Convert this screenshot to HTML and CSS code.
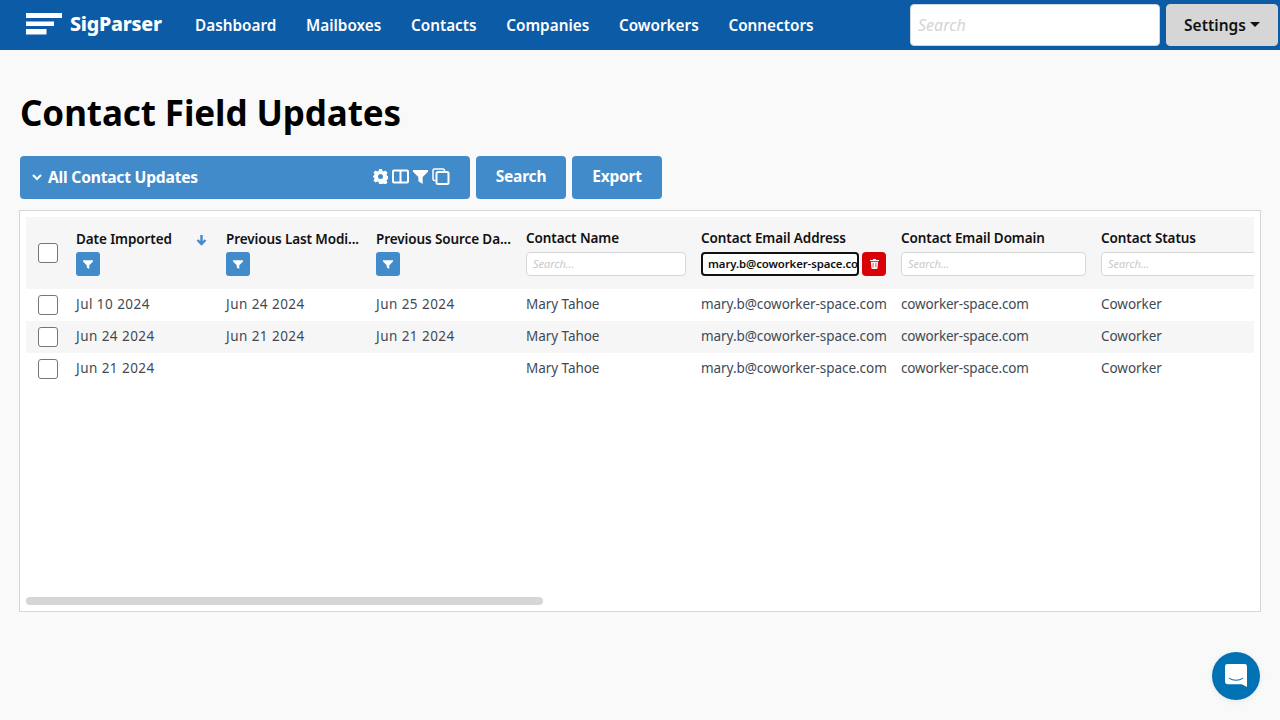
FILE: index.html
```html
<!DOCTYPE html>
<html lang="en">
<head>
<meta charset="utf-8">
<title>Contact Field Updates</title>
<link rel="stylesheet" href="styles.css">
</head>
<body>
<header class="nav">
  <a class="brand">
    <svg class="brand-mark" width="36" height="23" viewBox="0 0 36 23"><path fill="#fff" d="M0 1h36v5H0zM0 9.500h28v4.500H0zM0 17h20.500v5.500H0z"/></svg>
    <span class="brand-name">SigParser</span>
  </a>
  <nav class="nav-links">
    <a>Dashboard</a><a>Mailboxes</a><a>Contacts</a><a>Companies</a><a>Coworkers</a><a>Connectors</a>
  </nav>
  <input class="nav-search" placeholder="Search">
  <button class="settings">Settings<span class="caret"></span></button>
</header>
<main class="page">
  <h1 class="title">Contact Field Updates</h1>
  <div class="toolbar">
    <div class="view-select">
      <svg class="chev" width="10" height="7" viewBox="0 0 10 7"><path d="M1 1l4 4 4-4" fill="none" stroke="#fff" stroke-width="2"/></svg>
      <span class="view-name">All Contact Updates</span>
      <span class="view-icons">
        <svg width="15" height="15" viewBox="0 0 15 15"><path fill="#fff" fill-rule="evenodd" d="M6 0h3l.4 2 1.300.6 1.800-1 2 2.100-1 1.700.5 1.300 2 .4v3l-2 .4-.5 1.300 1 1.700-2 2.100-1.800-1-1.300.5L9 15H6l-.4-2-1.300-.5-1.800 1-2-2.100 1-1.700L1 8.400l-2-.4v-1l2-.4.5-1.300-1-1.700 2-2.100 1.800 1 1.300-.6zM7.500 5a2.500 2.500 0 1 0 0 5 2.500 2.500 0 0 0 0-5z"/></svg>
        <svg width="17" height="15" viewBox="0 0 17 15"><path fill="none" stroke="#fff" stroke-width="2" d="M2 1.500h13a1 1 0 0 1 1 1v10a1 1 0 0 1-1 1H2a1 1 0 0 1-1-1v-10a1 1 0 0 1 1-1zM8.500 1.500v12"/></svg>
        <svg width="15" height="15" viewBox="0 0 14 14"><path fill="#fff" d="M0 1h14v1.500L9 7.500V14l-4-2.500v-4L0 2.500z"/></svg>
        <svg width="18" height="17" viewBox="0 0 18 17"><path fill="none" stroke="#fff" stroke-width="1.500" d="M3.500 12.500h-1a1.500 1.500 0 0 1-1.500-1.500V2.500A1.500 1.500 0 0 1 2.500 1H11a1.500 1.500 0 0 1 1.500 1.500v1"/><rect x="4.500" y="4" width="12" height="12" rx="1.500" fill="none" stroke="#fff" stroke-width="2"/></svg>
      </span>
    </div>
    <button class="action">Search</button>
    <button class="action">Export</button>
  </div>
  <section class="panel">
    <div class="table">
      <div class="row head">
        <div class="cell check"><span class="box"></span></div>
        <div class="cell col">
          <div class="label label-sorted"><span>Date Imported</span>
            <svg width="11" height="12" viewBox="0 0 11 12"><path fill="none" stroke="#428bca" stroke-width="2.400" d="M5.500 1v9M1.500 6l4 4 4-4"/></svg>
          </div>
          <span class="filter"><svg width="10" height="11" viewBox="0 0 12 12"><path fill="#fff" d="M0 1h12v1.500L7.500 7v4.500l-3-2V7L0 2.500z"/></svg></span>
        </div>
        <div class="cell col">
          <div class="label">Previous Last Modi...</div>
          <span class="filter"><svg width="10" height="11" viewBox="0 0 12 12"><path fill="#fff" d="M0 1h12v1.500L7.500 7v4.500l-3-2V7L0 2.500z"/></svg></span>
        </div>
        <div class="cell col">
          <div class="label">Previous Source Da...</div>
          <span class="filter"><svg width="10" height="11" viewBox="0 0 12 12"><path fill="#fff" d="M0 1h12v1.500L7.500 7v4.500l-3-2V7L0 2.500z"/></svg></span>
        </div>
        <div class="cell col col-s">
          <div class="label">Contact Name</div>
          <input class="col-search" placeholder="Search...">
        </div>
        <div class="cell col col-s">
          <div class="label">Contact Email Address</div>
          <div class="active-filter">
            <input class="col-search active" value="mary.b@coworker-space.com">
            <span class="trash"><svg width="9" height="10" viewBox="0 0 10 11"><path fill="#fff" fill-rule="evenodd" d="M3.500 0h3l.5 1h3v1.300H0V1h3zM1 3h8l-.6 7a1 1 0 0 1-1 1H2.600a1 1 0 0 1-1-1zm2 1.200v5.300h.8V4.200zm3.200 0v5.300H7V4.200z"/></svg></span>
          </div>
        </div>
        <div class="cell col col-s">
          <div class="label">Contact Email Domain</div>
          <input class="col-search" placeholder="Search...">
        </div>
        <div class="cell col col-s">
          <div class="label">Contact Status</div>
          <input class="col-search" placeholder="Search...">
        </div>
      </div>
      <div class="row body">
        <div class="cell check"><span class="box"></span></div>
        <div class="cell date">Jul 10 2024</div><div class="cell date">Jun 24 2024</div><div class="cell date">Jun 25 2024</div>
        <div class="cell">Mary Tahoe</div><div class="cell">mary.b@coworker-space.com</div><div class="cell domain">coworker-space.com</div><div class="cell">Coworker</div>
      </div>
      <div class="row body alt">
        <div class="cell check"><span class="box"></span></div>
        <div class="cell date">Jun 24 2024</div><div class="cell date">Jun 21 2024</div><div class="cell date">Jun 21 2024</div>
        <div class="cell">Mary Tahoe</div><div class="cell">mary.b@coworker-space.com</div><div class="cell domain">coworker-space.com</div><div class="cell">Coworker</div>
      </div>
      <div class="row body">
        <div class="cell check"><span class="box"></span></div>
        <div class="cell date">Jun 21 2024</div><div class="cell"></div><div class="cell"></div>
        <div class="cell">Mary Tahoe</div><div class="cell">mary.b@coworker-space.com</div><div class="cell domain">coworker-space.com</div><div class="cell">Coworker</div>
      </div>
    </div>
    <div class="scrollbar"></div>
  </section>
</main>
<button class="chat" aria-label="Chat">
  <svg width="22" height="24" viewBox="0.500 1 23 25"><path fill="#fff" d="M3 1h18a2.500 2.500 0 0 1 2.500 2.500V25l-5.500-3H3a2.500 2.500 0 0 1-2.500-2.500v-16A2.500 2.500 0 0 1 3 1z"/><path d="M5 16c4 2.600 10 2.600 14 0" fill="none" stroke="#0071b2" stroke-width="1.100" stroke-linecap="round"/></svg>
</button>
</body>
</html>
```
FILE: styles.css
```css
* { box-sizing: border-box; }
html, body { margin: 0; padding: 0; height: 100%; overflow: hidden; }
body { background: #f9f9f9; font-family: "Noto Sans", "Open Sans", sans-serif; color: #000; }

.nav { height: 50px; background: #0c5ba6; display: flex; align-items: center; padding: 0 2px 0 26px; }
.brand { display: flex; align-items: center; gap: 8px; width: 169px; }
.brand-mark { display: block; margin-top: -3px; }
.brand-name { color: #fff; font-family: "Noto Sans", sans-serif; font-weight: 800; font-size: 19.600px; line-height: 22px; margin-top: -2px; letter-spacing: -.2px; }
.nav-links { display: flex; gap: 29.700px; flex: 1; }
.nav-links a { color: #fff; font-weight: 600; font-size: 15.300px; line-height: 20px; }
.nav-search { width: 250px; height: 42px; border: 1px solid #ced4da; border-radius: 4px; background: #fff; padding: 0 7px; font: italic 16px "Noto Sans", sans-serif; margin-right: 6px; outline: none; }
.nav-search::placeholder { color: #d4d4d4; }
.settings { width: 112px; height: 42px; border: 1px solid #d6d6d6; background: #d6d6d6; border-radius: 4px; font: 600 15.500px "Noto Sans", sans-serif; color: #111; padding: 0 0 1px; display: flex; align-items: center; justify-content: center; gap: 4px; }
.caret { width: 0; height: 0; border: 5px solid transparent; border-top: 5px solid #111; border-bottom: 0; }

.page { padding: 0 19px; }
.title { margin: 43px 0 0 1px; font-size: 35px; line-height: 40px; font-weight: 700; letter-spacing: -.1px; color: #000; }
.toolbar { display: flex; gap: 6px; margin: 23px 0 11px 1px; height: 43px; }
.view-select { width: 450px; background: #428bca; border-radius: 4px; display: flex; align-items: center; padding: 0 20px 2px 12px; color: #fff; }
.chev { margin-right: 6px; margin-top: 2px; }
.view-name { font-weight: 700; font-size: 15.600px; letter-spacing: -.2px; flex: 1; }
.view-icons { display: flex; align-items: center; gap: 4px; }
.view-icons svg { display: block; }
.action { width: 90px; background: #428bca; color: #fff; border: 0; border-radius: 4px; font: 700 15.500px "Noto Sans", sans-serif; letter-spacing: -.2px; padding: 0 0 3px; }

.panel { width: 1242px; height: 402px; background: #fff; border: 1px solid #d6d6d6; padding: 6px 6px 0; display: flex; flex-direction: column; }
.table { height: 372px; overflow: hidden; }
.row { display: grid; grid-template-columns: 50px 150px 150px 150px 175px 200px 200px 200px; width: 1275px; }
.head { height: 72px; background: #f6f6f6; }
.body { height: 32px; align-items: center; font-size: 13.500px; color: #3f4a54; letter-spacing: -.05px; }
.body .cell:not(.check) { white-space: nowrap; padding-bottom: 2px; }
.body .date { letter-spacing: .45px; }
.body .domain { letter-spacing: -.17px; }
.alt { background: #f6f6f6; }
.cell { min-width: 0; }
.check { display: flex; align-items: center; padding-left: 12px; }
.box { width: 20px; height: 20px; border: 1px solid #767676; border-radius: 3px; background: #fff; display: block; }
.col { padding-top: 13px; }
.col-s { padding-top: 12px; padding-right: 15px; }
.label { font-weight: 600; font-size: 13.500px; line-height: 18px; letter-spacing: -.1px; color: #111; white-space: nowrap; height: 20px; }
.label-sorted { display: flex; align-items: flex-start; justify-content: space-between; padding-right: 19px; }
.label-sorted svg { margin-top: 4px; }
.filter { display: flex; align-items: center; justify-content: center; width: 24px; height: 24px; background: #428bca; border-radius: 3px; margin-top: 2px; }
.col-search { display: block; width: 100%; height: 24px; margin-top: 3px; padding: 0 6px 2px; border: 1px solid #d6d6d6; border-radius: 4px; background: #fff; font: italic 11px "Noto Sans", sans-serif; outline: none; }
.col-search::placeholder { color: #c9c9c9; }
.active-filter { display: flex; gap: 3px; margin-right: 0; }
.col-search.active { width: 158px; flex: none; border: 2px solid #111; font: 600 11.400px "Noto Sans", sans-serif; color: #111; padding: 0 0 2px 5px; letter-spacing: -.1px; }
.trash { width: 24px; height: 24px; flex: none; margin-top: 3px; background: #d90007; border-radius: 4px; display: flex; align-items: center; justify-content: center; }

.scrollbar { width: 517px; height: 8px; background: #d6d6d6; border-radius: 4px; margin-top: 8px; }

.chat { position: fixed; right: 20px; bottom: 20px; width: 48px; height: 48px; border: 0; padding: 0; border-radius: 50%; background: #0071b2; display: flex; align-items: center; justify-content: center; box-shadow: 0 1px 6px rgba(0,0,0,.08); }
```
